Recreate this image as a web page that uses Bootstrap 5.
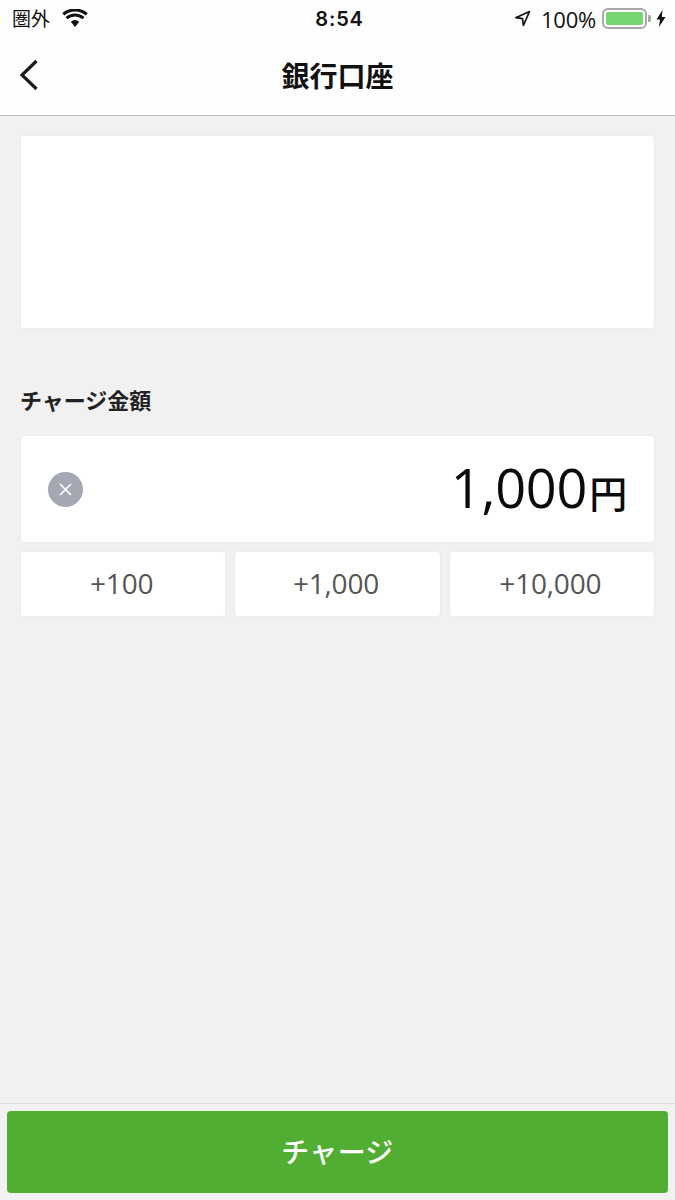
<!DOCTYPE html>
<html lang="ja">
<head>
<meta charset="utf-8">
<title>銀行口座</title>
<link href="https://cdn.jsdelivr.net/npm/bootstrap@5.3.0/dist/css/bootstrap.min.css" rel="stylesheet">
<style>
html,body{height:1200px;margin:0;overflow:hidden}
body{background:#f1f1f1;color:#111;font-family:"Open Sans","Noto Sans CJK JP",sans-serif}
.shell{height:1200px}
.topper{background:#fefefe;height:116px;border-bottom:1px solid #bdbdbd}
.status{height:40px;padding:0 9px 3px 12px;font-size:19px;line-height:1}
.status-time{left:4px;right:0;top:9px;text-align:center;font-size:20px;font-weight:600;letter-spacing:.8px;font-family:"Inter","Noto Sans","Open Sans",sans-serif}
.sig{font-size:19px;color:#111;font-family:"Noto Sans CJK JP",sans-serif;margin-right:12px;font-weight:400;padding-bottom:2px}
.pct{font-size:22px;font-family:"Open Sans",sans-serif;margin:0 6px 0 10px;color:#111;letter-spacing:-.2px}
.batt{width:45px;height:21px;border:2px solid #a8a8a8;border-radius:6px;padding:2px}
.batt-fill{height:100%;background:#76d672;border-radius:2px}
.batt-cap{width:3px;height:7px;background:#a8a8a8;border-radius:0 2px 2px 0;margin:0 5px 0 1px}
.navrow{height:75px}
.navrow h1{font-size:28px;font-weight:700;margin:0;line-height:1;padding-bottom:6px;font-family:"Noto Sans CJK JP",sans-serif;color:#111}
.backbtn{left:19px;top:19px;line-height:0}
.content{padding:19px 20px 0}
.panel{background:#fff;border:1px solid #ececec;border-radius:4px}
.blank{height:194px}
.label-charge{font-size:22px;font-weight:700;line-height:30px;margin:55px 0 21px;color:#222;font-family:"Noto Sans CJK JP",sans-serif}
.amount{height:108px;padding:0 27px 0 27px;margin-bottom:8px}
.clear-x{width:35px;height:35px;background:#a3a8b3;border-radius:50%}
.val{font-size:54px;line-height:1;color:#0a0a0a;font-family:"Open Sans",sans-serif;padding-bottom:5px;letter-spacing:-.2px}
.yen{font-size:38px;font-weight:500;font-family:"Noto Sans CJK JP",sans-serif;margin-left:2px}
.adds{gap:8px}
.addbtn{flex:1 1 0;height:66px;font-size:28px;color:#555;font-family:"Open Sans",sans-serif;padding:0 3px 3px 0;border-radius:4px;background:#fff;border:1px solid #ececec;letter-spacing:-.2px}
.footer-bar{border-top:1px solid #dcdcdc;padding:7px 7px 7px 7px}
.charge{background:#52ae33;color:#fff;height:82px;font-size:28px;font-weight:500;border:0;border-radius:4px;letter-spacing:.3px;font-family:"Noto Sans CJK JP",sans-serif;padding:0 0 3px}
</style>
</head>
<body>
<div class="shell d-flex flex-column">
  <header class="topper">
    <div class="status d-flex align-items-center position-relative">
      <span class="sig">圏外</span>
      <svg width="26" height="19" viewBox="0 0 26 19" aria-hidden="true"><path d="M13 18l-4.200-5.200a6.500 6.500 0 0 1 8.400 0z" fill="#111"/><path d="M4.500 9.200a13 13 0 0 1 17 0M1.300 5.300a18 18 0 0 1 23.400 0" fill="none" stroke="#111" stroke-width="3.100"/></svg>
      <span class="status-time position-absolute">8:54</span>
      <span class="ms-auto d-flex align-items-center">
        <svg width="17" height="17" viewBox="0 0 17 17" aria-hidden="true"><path d="M15.500 1.500L1.800 7.700l6.700.9.900 6.900z" fill="none" stroke="#111" stroke-width="1.700" stroke-linejoin="round"/></svg>
        <span class="pct">100%</span>
        <span class="batt d-block"><span class="batt-fill d-block"></span></span>
        <span class="batt-cap d-block"></span>
        <svg width="10" height="17" viewBox="0 0 10 17" aria-hidden="true"><path d="M6.500 0L0.500 9.500h3.500L3 17l6.500-10H5.800z" fill="#111"/></svg>
      </span>
    </div>
    <div class="navrow d-flex align-items-center justify-content-center position-relative">
      <a class="backbtn position-absolute" href="#" aria-label="戻る">
        <svg width="20" height="32" viewBox="0 0 20 32" aria-hidden="true"><path d="M17.500 2L3 16l14.500 14" fill="none" stroke="#1a1a1a" stroke-width="3.200"/></svg>
      </a>
      <h1>銀行口座</h1>
    </div>
  </header>
  <main class="content flex-grow-1">
    <div class="panel blank"></div>
    <div class="label-charge">チャージ金額</div>
    <div class="panel amount d-flex align-items-center justify-content-between">
      <span class="clear-x d-flex align-items-center justify-content-center">
        <svg width="13" height="13" viewBox="0 0 13 13" aria-hidden="true"><path d="M1 1l11 11M12 1L1 12" stroke="#fff" stroke-width="1.700"/></svg>
      </span>
      <span class="val">1,000<span class="yen">円</span></span>
    </div>
    <div class="adds d-flex">
      <button type="button" class="btn addbtn">+100</button>
      <button type="button" class="btn addbtn">+1,000</button>
      <button type="button" class="btn addbtn">+10,000</button>
    </div>
  </main>
  <footer class="footer-bar">
    <button type="button" class="btn charge w-100">チャージ</button>
  </footer>
</div>
<script src="https://cdn.jsdelivr.net/npm/bootstrap@5.3.0/dist/js/bootstrap.bundle.min.js"></script>
</body>
</html>
